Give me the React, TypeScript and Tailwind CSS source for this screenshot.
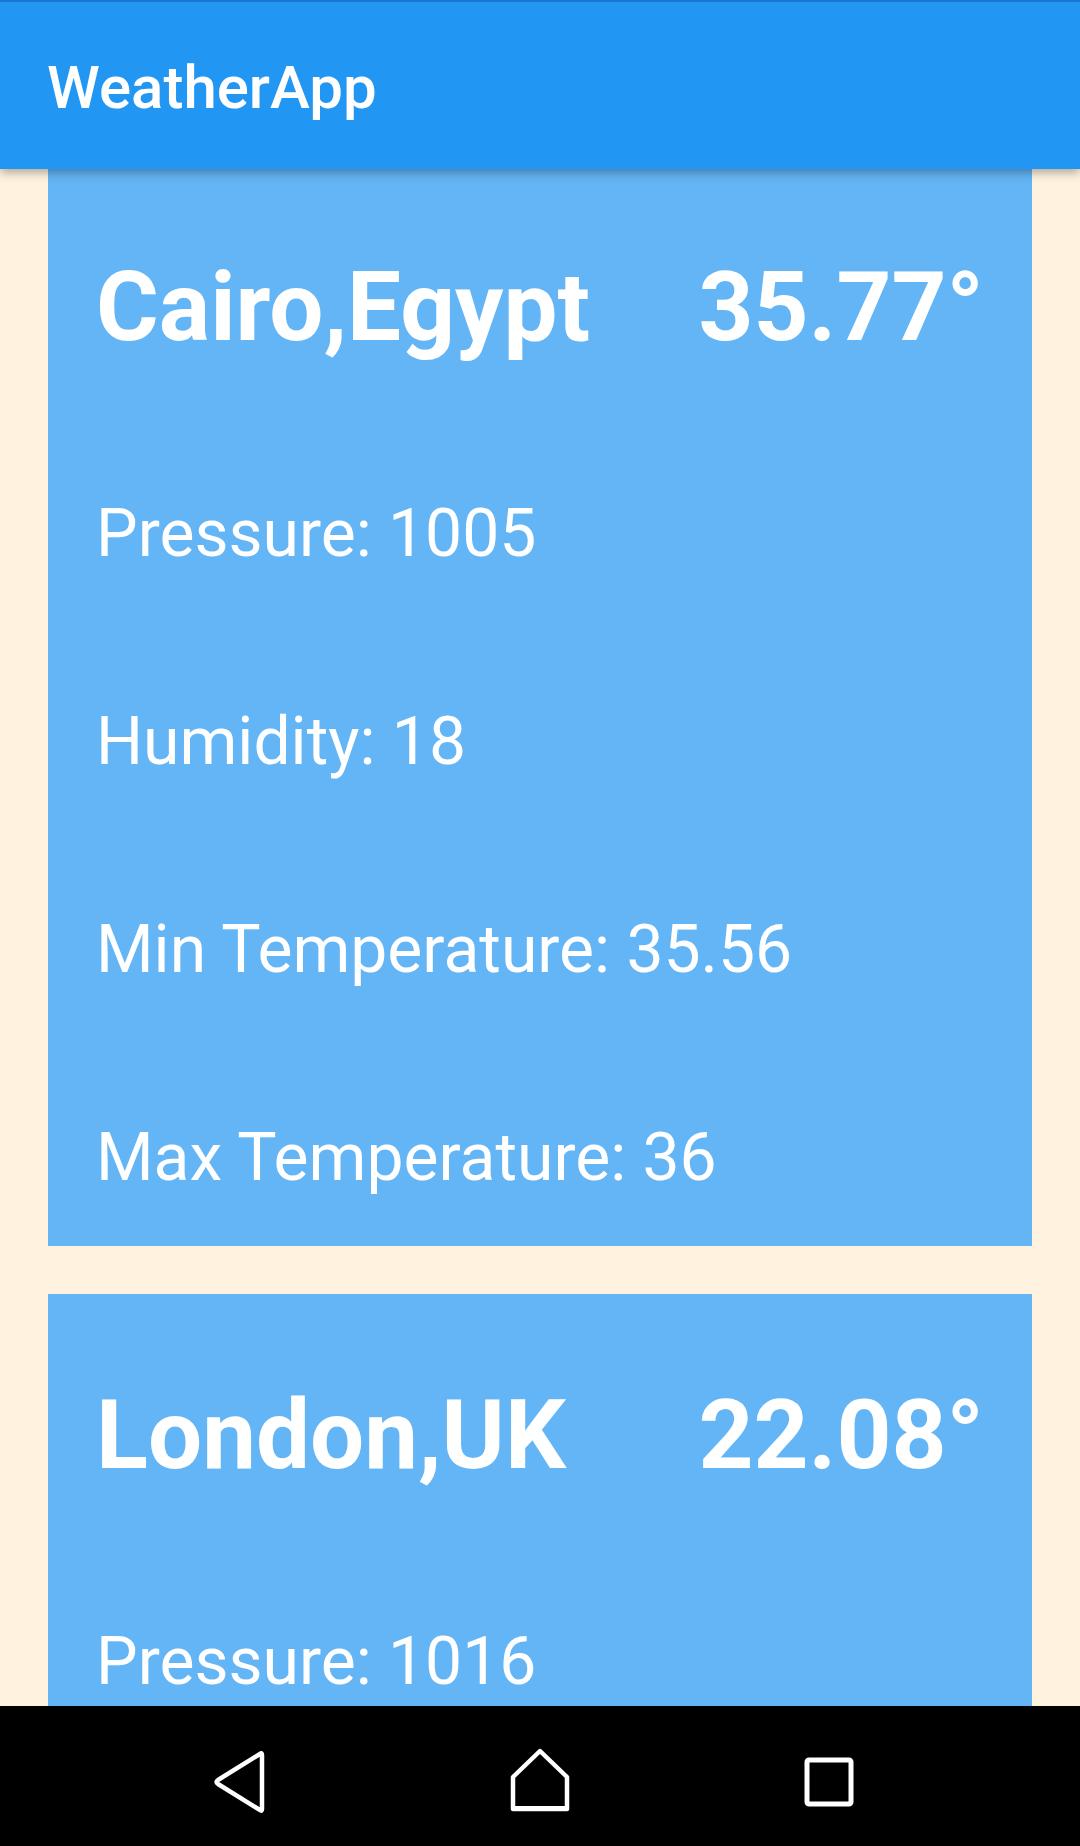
type City = {
  name: string;
  temp: string;
  pressure: number;
  humidity?: number;
  min?: number;
  max?: number;
};

// second card only shows pressure before the nav bar covers it
const cities: City[] = [
  {
    name: "Cairo,Egypt",
    temp: "35.77°",
    pressure: 1005,
    humidity: 18,
    min: 35.56,
    max: 36,
  },
  {
    name: "London,UK",
    temp: "22.08°",
    pressure: 1016,
  },
];

function WeatherCard({ city }: { city: City }) {
  return (
    <div className="w-full shrink-0 bg-[#64B5F6] px-12 pt-[81px] pb-[48px] text-white">
      <div className="flex items-center justify-between text-[96px] leading-[120px] font-bold">
        <span>{city.name}</span>
        <span>{city.temp}</span>
      </div>
      <div className="mt-[127px] flex flex-col gap-[128px] text-[66px] leading-[80px]">
        <p>Pressure: {city.pressure}</p>
        {city.humidity !== undefined && <p>Humidity: {city.humidity}</p>}
        {city.min !== undefined && <p>Min Temperature: {city.min}</p>}
        {city.max !== undefined && <p>Max Temperature: {city.max}</p>}
      </div>
    </div>
  );
}

function NavBar() {
  return (
    <div className="flex h-[140px] w-full shrink-0 items-center bg-black pt-[12px]">
      <svg className="ml-[210px]" width="60" height="70" viewBox="0 0 60 70">
        <path
          d="M52 8 L52 62 Q52 65 50 63 L8 37 Q5 35 8 33 L50 7 Q52 5 52 8 Z"
          fill="none"
          stroke="white"
          strokeWidth="4.5"
          strokeLinejoin="round"
        />
      </svg>
      <svg className="ml-[240px]" width="60" height="70" viewBox="0 0 60 70">
        <path
          d="M30 4 L57 30 L57 62 L3 62 L3 30 Z"
          fill="none"
          stroke="white"
          strokeWidth="4.5"
          strokeLinejoin="round"
        />
        <rect x="3" y="59" width="54" height="5" fill="white" />
      </svg>
      <svg className="ml-[229px]" width="60" height="70" viewBox="0 0 60 70">
        <rect
          x="8"
          y="13"
          width="44"
          height="44"
          rx="2"
          fill="none"
          stroke="white"
          strokeWidth="5"
        />
      </svg>
    </div>
  );
}

export default function App() {
  return (
    <div
      className="flex h-[1846px] w-[1080px] flex-col overflow-hidden bg-[#FFF3E0]"
      style={{ fontFamily: "Roboto, 'Noto Sans', sans-serif" }}
    >
      <header className="relative z-10 shrink-0 shadow-[0_3px_10px_rgba(0,0,0,0.35)]">
        <div className="h-[2px] bg-[#1976D2]" />
        <div className="flex h-[167px] items-center bg-[#2196F3] pl-[47px] pt-[4px]">
          <h1 className="text-[60px] font-medium text-white">WeatherApp</h1>
        </div>
      </header>
      <main className="-mt-[3px] flex flex-1 flex-col gap-12 overflow-hidden px-12">
        {cities.map((city) => (
          <WeatherCard key={city.name} city={city} />
        ))}
      </main>
      <NavBar />
    </div>
  );
}
